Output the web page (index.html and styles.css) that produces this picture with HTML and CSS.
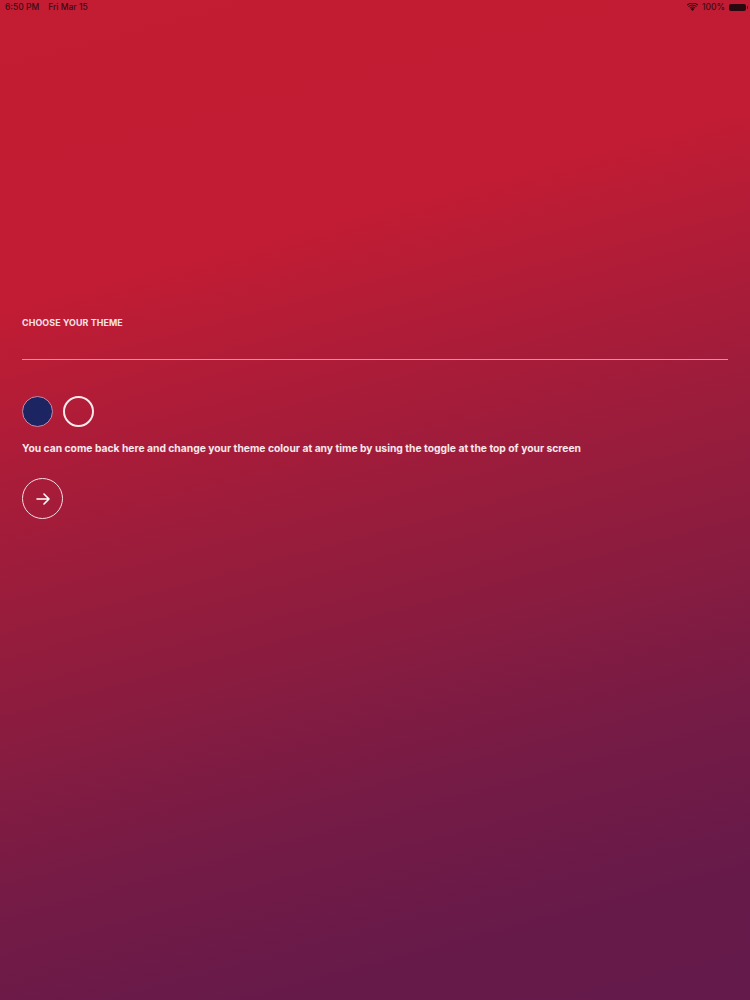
FILE: index.html
```html
<!DOCTYPE html>
<html>
<head>
<meta charset="utf-8">
<link rel="stylesheet" href="styles.css">
</head>
<body>
<div class="screen">
  <div class="status">
    <div class="status-left"><span>6:50 PM</span><span>Fri Mar 15</span></div>
    <div class="status-right">
      <svg class="wifi" width="11" height="8" viewBox="0 0 11 8"><path d="M5.5 8 L3.6 5.9 A2.8 2.8 0 0 1 7.4 5.9 Z M2.6 4.8 A4.3 4.3 0 0 1 8.4 4.8 L7.7 5.5 A3.3 3.3 0 0 0 3.3 5.5 Z M1.1 3.3 A6.4 6.4 0 0 1 9.9 3.3 L9.2 4.1 A5.3 5.3 0 0 0 1.8 4.1 Z M-0.3 1.8 A8.4 8.4 0 0 1 11.3 1.8 L10.6 2.6 A7.4 7.4 0 0 0 0.4 2.6 Z" fill="#3a0b14"/></svg>
      <span>100%</span>
      <span class="battery"><span class="battery-fill"></span></span>
    </div>
  </div>
  <main class="content">
    <div class="label">CHOOSE YOUR THEME</div>
    <div class="rule"></div>
    <div class="swatches">
      <span class="swatch navy"></span>
      <span class="swatch outline"></span>
    </div>
    <p class="note">You can come back here and change your theme colour at any time by using the toggle at the top of your screen</p>
    <button class="next">
      <svg width="18" height="18" viewBox="0 0 18 18"><path d="M3 9 H15 M10 4 L15 9 L10 14" fill="none" stroke="#fff" stroke-width="1.6" stroke-linecap="round" stroke-linejoin="round"/></svg>
    </button>
  </main>
</div>
</body>
</html>
```
FILE: styles.css
```css
html, body {
  margin: 0;
  padding: 0;
}
body {
  width: 750px;
  height: 1000px;
  overflow: hidden;
  font-family: Inter, "Liberation Sans", sans-serif;
}
.screen {
  width: 750px;
  height: 1000px;
  background: linear-gradient(165deg, #c31c33 0%, #c11c34 26%, #a51c3a 43%, #8c1c3f 60%, #741b46 76%, #661a4a 90%, #641a4b 100%);
  display: flex;
  flex-direction: column;
}
.status {
  height: 14px;
  display: flex;
  justify-content: space-between;
  align-items: center;
  padding: 0 2px 0 5px;
  font-size: 8.5px;
  color: #3a0b14;
  font-weight: 500;
}
.status-left {
  display: flex;
  gap: 9px;
}
.status-right {
  display: flex;
  align-items: center;
  gap: 4px;
}
.battery {
  width: 17px;
  height: 7px;
  border-radius: 2px;
  background: #2a0810;
  position: relative;
  margin-right: 2px;
}
.battery::after {
  content: "";
  position: absolute;
  right: -2px;
  top: 2px;
  width: 1.5px;
  height: 3px;
  background: #2a0810;
  border-radius: 0 1px 1px 0;
}
.content {
  padding: 304px 22px 0 22px;
  display: flex;
  flex-direction: column;
  align-items: flex-start;
}
.label {
  font-size: 8.9px;
  font-weight: 700;
  color: #f7e3e6;
  letter-spacing: 0.1px;
  line-height: 10px;
}
.rule {
  align-self: stretch;
  height: 1px;
  background: #ee8e9b;
  margin-top: 31px;
}
.swatches {
  display: flex;
  gap: 10px;
  margin-top: 36px;
}
.swatch {
  width: 31px;
  height: 31px;
  border-radius: 50%;
  box-sizing: border-box;
}
.navy {
  background: #1c2462;
  border: 1px solid #c98aa4;
}
.outline {
  border: 2px solid #fbe9ec;
}
.note {
  margin: 15px 0 0 0;
  font-size: 10.3px;
  font-weight: 700;
  color: #f8e8eb;
  line-height: 13px;
}
.next {
  margin-top: 23px;
  width: 41px;
  height: 41px;
  border-radius: 50%;
  border: 1.5px solid #f6dde2;
  background: transparent;
  padding: 0;
  display: flex;
  align-items: center;
  justify-content: center;
}
```
